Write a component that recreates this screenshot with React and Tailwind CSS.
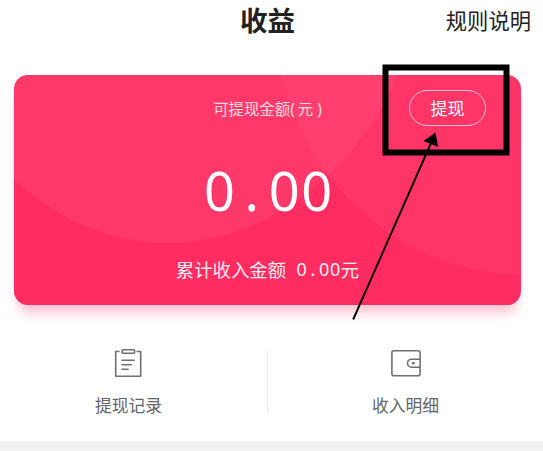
function Digits({ cell, className }) {
  return (
    <span className={className}>
      <span className={cell}>0</span>
      <span className={cell}>.</span>
      <span className={cell}>0</span>
      <span className={cell}>0</span>
    </span>
  );
}

function RecordIcon() {
  return (
    <svg width="30" height="30" viewBox="0 0 30 30" fill="none" stroke="#707070" strokeWidth="1.6" strokeLinecap="round" strokeLinejoin="round">
      <path d="M6 3.5H2.7V28.2H27.7V3.5H24.2" />
      <rect x="9.2" y="1.7" width="12.4" height="3.6" rx="0.8" />
      <path d="M8.9 12.2H21.3M8.9 16.7H18.3M8.9 21.3H15.1" />
    </svg>
  );
}

function WalletIcon() {
  return (
    <svg width="30" height="30" viewBox="0 0 30 30" fill="none" stroke="#707070" strokeWidth="1.6">
      <rect x="0.9" y="2.7" width="28.2" height="25" rx="2" />
      <path d="M29 11.2H20.5A4 4 0 0 0 20.5 19.2H29" />
      <circle cx="22.3" cy="15.2" r="1.4" fill="#707070" stroke="none" />
    </svg>
  );
}

export default function App() {
  return (
    <div className="relative flex h-[451px] w-[543px] flex-col overflow-hidden bg-white font-['Noto_Sans_CJK_SC',sans-serif]">
      <header className="grid h-[75px] shrink-0 grid-cols-[1fr_auto_1fr] items-start pl-[4px] pr-[12px] text-[#222]">
        <h1 className="col-start-2 text-[27.5px] font-bold leading-[39px]">收益</h1>
        <span className="justify-self-end text-[21.3px] leading-[40px]">规则说明</span>
      </header>

      <section className="relative ml-[14px] mr-[22px] flex h-[230px] shrink-0 flex-col items-center rounded-[14px] bg-[#ff2c61] text-white shadow-[0_12px_12px_-4px_rgba(255,44,97,0.28)]">
        <svg className="absolute inset-0 rounded-[14px]" width="507" height="230" viewBox="0 0 507 230">
          <path d="M0 0V105C46 145 96 168 153 168C250 168 342 100 383 0Z" fill="#fff" fillOpacity="0.06" />
          <path d="M267 0C298 120 396 199 507 199V0Z" fill="#fff" fillOpacity="0.04" />
        </svg>
        <div className="relative mt-[21px] text-[15.4px] leading-[24px] text-white/80">
          可提现金额<span className="font-['Noto_Sans',sans-serif] tracking-[3px]">(</span>元<span className="pl-[4px] font-['Noto_Sans',sans-serif]">)</span>
        </div>
        <Digits
          className="relative mt-[36px] flex pl-[1px] font-['Noto_Sans',sans-serif] text-[54px] leading-[64px]"
          cell="w-[32.4px] text-center"
        />
        <div className="relative mt-[34px] flex text-[18.4px] leading-[26px] text-white/90">
          累计收入金额
          <Digits
            className="ml-[10px] flex font-['Noto_Sans',sans-serif] text-[18px]"
            cell="w-[11.2px] text-center"
          />
          元
        </div>
        <button className="absolute right-[35px] top-[15px] h-[36px] w-[77px] rounded-full border border-white/70 pb-[1px] text-[17px] leading-[32px]">提现</button>
      </section>

      <nav className="flex h-[136px] shrink-0 items-start pt-[43px] text-[16.8px] text-[#666]">
        <div className="flex w-[267px] flex-col items-center pr-[11px]">
          <RecordIcon />
          <span className="mt-[14px] pl-[1px] leading-[26px]">提现记录</span>
        </div>
        <div className="mt-[3px] h-[61px] w-px bg-[#e8e8e8]" />
        <div className="flex flex-1 flex-col items-center">
          <WalletIcon />
          <span className="mt-[14px] leading-[26px]">收入明细</span>
        </div>
      </nav>
      <div className="flex-1 bg-[#f2f2f2]" />

      <svg className="absolute inset-0" width="543" height="451" viewBox="0 0 543 451">
        <rect x="385.5" y="67.5" width="121" height="85" fill="none" stroke="#000" strokeWidth="6" />
        <path d="M353.2 319.5L431.5 142" stroke="#000" strokeWidth="1.9" />
        <path d="M435.5 132.5L423.5 141L438.2 147Z" fill="#000" />
      </svg>
    </div>
  );
}
